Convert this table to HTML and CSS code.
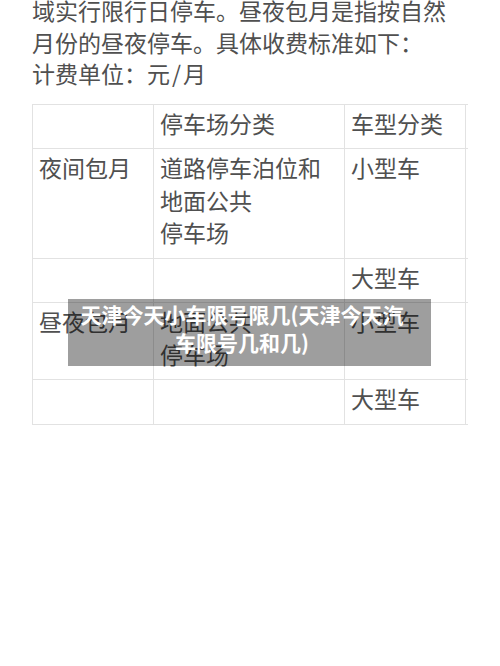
FILE: index.html
```html
<!DOCTYPE html>
<html lang="zh-CN">
<head>
<meta charset="utf-8">
<link rel="stylesheet" href="styles.css">
</head>
<body>
<div class="page">
  <div class="doc">
    <p class="para">域实行限行日停车。昼夜包月是指按自然<br>月份的昼夜停车。具体收费标准如下：<br>计费单位：元<span class="slash">/</span>月</p>
    <div class="table-clip">
      <table class="fees">
        <colgroup>
          <col class="c1"><col class="c2"><col class="c3"><col class="c4">
        </colgroup>
        <tr class="r-head"><td></td><td>停车场分类</td><td>车型分类</td><td></td></tr>
        <tr><td>夜间包月</td><td>道路停车泊位和<br>地面公共<br>停车场</td><td>小型车</td><td></td></tr>
        <tr><td></td><td></td><td>大型车</td><td></td></tr>
        <tr><td>昼夜包月</td><td>地面公共<br>停车场</td><td>小型车</td><td></td></tr>
        <tr><td></td><td></td><td>大型车</td><td></td></tr>
      </table>
    </div>
  </div>
  <div class="caption">天津今天小车限号限几(天津今天汽车限号几和几)</div>
</div>
</body>
</html>
```

FILE: styles.css
```css
html, body {
  margin: 0;
  padding: 0;
  background: #ffffff;
}

.page {
  position: relative;
  width: 500px;
  height: 666px;
  overflow: hidden;
  font-family: "Noto Sans CJK SC", "Noto Sans", sans-serif;
  color: #505050;
}

.doc {
  margin-top: -5px;
  padding-left: 32px;
}

.para {
  margin: 0;
  font-size: 23px;
  line-height: 31.5px;
  white-space: nowrap;
}

.slash {
  margin: 0 2px;
}

.table-clip {
  margin-top: 14px;
  width: 436px;
  overflow: hidden;
}

.fees {
  border-collapse: collapse;
  table-layout: fixed;
  width: 480px;
  font-size: 23px;
  line-height: 32.5px;
}

.c1 { width: 121px; }
.c2 { width: 191px; }
.c3 { width: 121px; }
.c4 { width: 47px; }

.fees td {
  border: 1px solid #e2e2e2;
  padding: 2px 6px 9px 6px;
  vertical-align: top;
  white-space: nowrap;
}

.caption {
  position: absolute;
  left: 68px;
  top: 299px;
  width: 363px;
  box-sizing: border-box;
  padding: 1px 20px 10px 5px;
  background: rgba(0, 0, 0, 0.38);
  color: #ffffff;
  font-weight: 700;
  font-size: 21px;
  line-height: 28px;
  text-align: center;
}
```
